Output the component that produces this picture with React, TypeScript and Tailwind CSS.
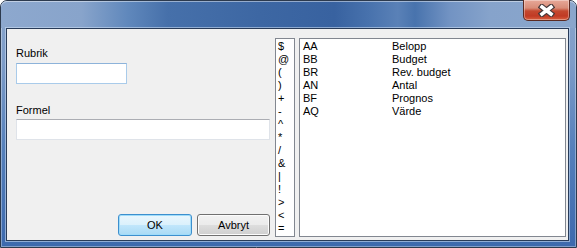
const SYMBOLS = ["$", "@", "(", ")", "+", "-", "^", "*", "/", "&", "|", "!", ">", "<", "="];

const FIELDS = [
  { code: "AA", name: "Belopp" },
  { code: "BB", name: "Budget" },
  { code: "BR", name: "Rev. budget" },
  { code: "AN", name: "Antal" },
  { code: "BF", name: "Prognos" },
  { code: "AQ", name: "Värde" },
];

function CloseButton() {
  return (
    <div className="absolute left-[523px] top-0 flex h-[21px] w-[47px] items-center justify-center rounded-b-[5px] border border-t-0 border-[#5b2a22] bg-[linear-gradient(180deg,#e7a899_0%,#d88c78_40%,#c4482f_55%,#c13a24_80%,#d8603f_100%)] shadow-[inset_0_0_0_1px_rgba(255,255,255,0.35)]">
      <svg width="17" height="13" viewBox="0 0 17 13">
        <path
          d="M4 3 L13 10 M13 3 L4 10"
          stroke="#45383a"
          strokeWidth="6"
          strokeLinecap="square"
          fill="none"
        />
        <path
          d="M4 3 L13 10 M13 3 L4 10"
          stroke="#ffffff"
          strokeWidth="3.6"
          strokeLinecap="square"
          fill="none"
        />
      </svg>
    </div>
  );
}

function Button({ label, primary }: { label: string; primary?: boolean }) {
  return (
    <button
      className={
        primary
          ? "flex h-[22px] w-[74px] items-center justify-center rounded-[3px] border border-[#3c8fce] bg-[linear-gradient(180deg,#eaf6fd_0%,#dbf1fc_48%,#c0e6fb_52%,#a9daf5_100%)] shadow-[inset_0_0_0_1px_#9fdcfa] text-[11px] text-black"
          : "flex h-[22px] w-[73px] items-center justify-center rounded-[3px] border border-[#707070] bg-[linear-gradient(180deg,#f2f2f2_0%,#ebebeb_48%,#dddddd_52%,#cfcfcf_100%)] shadow-[inset_0_0_0_1px_#fcfcfc] text-[11px] text-black"
      }
    >
      {label}
    </button>
  );
}

export default function App() {
  return (
    <div className="relative h-[248px] w-[577px] overflow-hidden bg-white font-['Liberation_Sans',Arial,sans-serif] text-[11px] leading-[13px] text-black">
      <div className="flex h-[248px] w-[577px] flex-col rounded-t-[7px] border border-[#2c3a4e] bg-[linear-gradient(180deg,#8aa6cc_0%,#7d9cc8_25%,#5580bb_60%,#3c69ad_100%)] shadow-[inset_0_0_0_1px_rgba(255,255,255,0.35)]">
        <div className="h-[27px] w-full rounded-t-[6px] bg-[linear-gradient(90deg,#8da8ce_0%,#88a4cb_14%,#6088bc_22%,#4670aa_29%,#3d67a3_45%,#3862a0_58%,#4872ad_64%,#5a81b7_69%,#4873ad_72%,#7293c3_78%,#86a3cb_85%,#8aa6cc_100%)] shadow-[inset_0_1px_0_rgba(255,255,255,0.45)]" />
        <div className="ml-[5px] mr-[7px] flex flex-1 border border-[#283b58] shadow-[0_0_0_1px_rgba(210,225,245,0.55)]">
          <div className="flex flex-1 bg-[#f0f0f0] pb-[3px] pr-[2px] pt-[9px]">
            <div className="flex w-[268px] flex-col pb-[1px] pl-[9px] pr-[5px] pt-[9px]">
              <div className="h-[13px]">Rubrik</div>
              <div className="mt-[3px] h-[21px] w-[111px] border border-[#a9cbea] border-t-[#8db3da] bg-white" />
              <div className="mt-[20px] h-[13px]">Formel</div>
              <div className="mt-[2px] h-[21px] w-[254px] border border-[#dfe3e9] border-t-[#abadb3] bg-white" />
              <div className="mt-auto flex justify-end gap-[5px]">
                <Button label="OK" primary />
                <Button label="Avbryt" />
              </div>
            </div>
            <div className="flex w-[20px] flex-col border border-[#828790] bg-white pl-[2px] pt-[1px]">
              {SYMBOLS.map((s) => (
                <div key={s} className="h-[13px]">
                  {s}
                </div>
              ))}
            </div>
            <div className="ml-[4px] flex flex-1 flex-col border border-[#828790] bg-white pl-[3px] pt-[1px]">
              {FIELDS.map((f) => (
                <div key={f.code} className="flex h-[13px]">
                  <span className="w-[89px]">{f.code}</span>
                  <span>{f.name}</span>
                </div>
              ))}
            </div>
          </div>
        </div>
        <div className="h-[6px]" />
      </div>
      <CloseButton />
    </div>
  );
}
